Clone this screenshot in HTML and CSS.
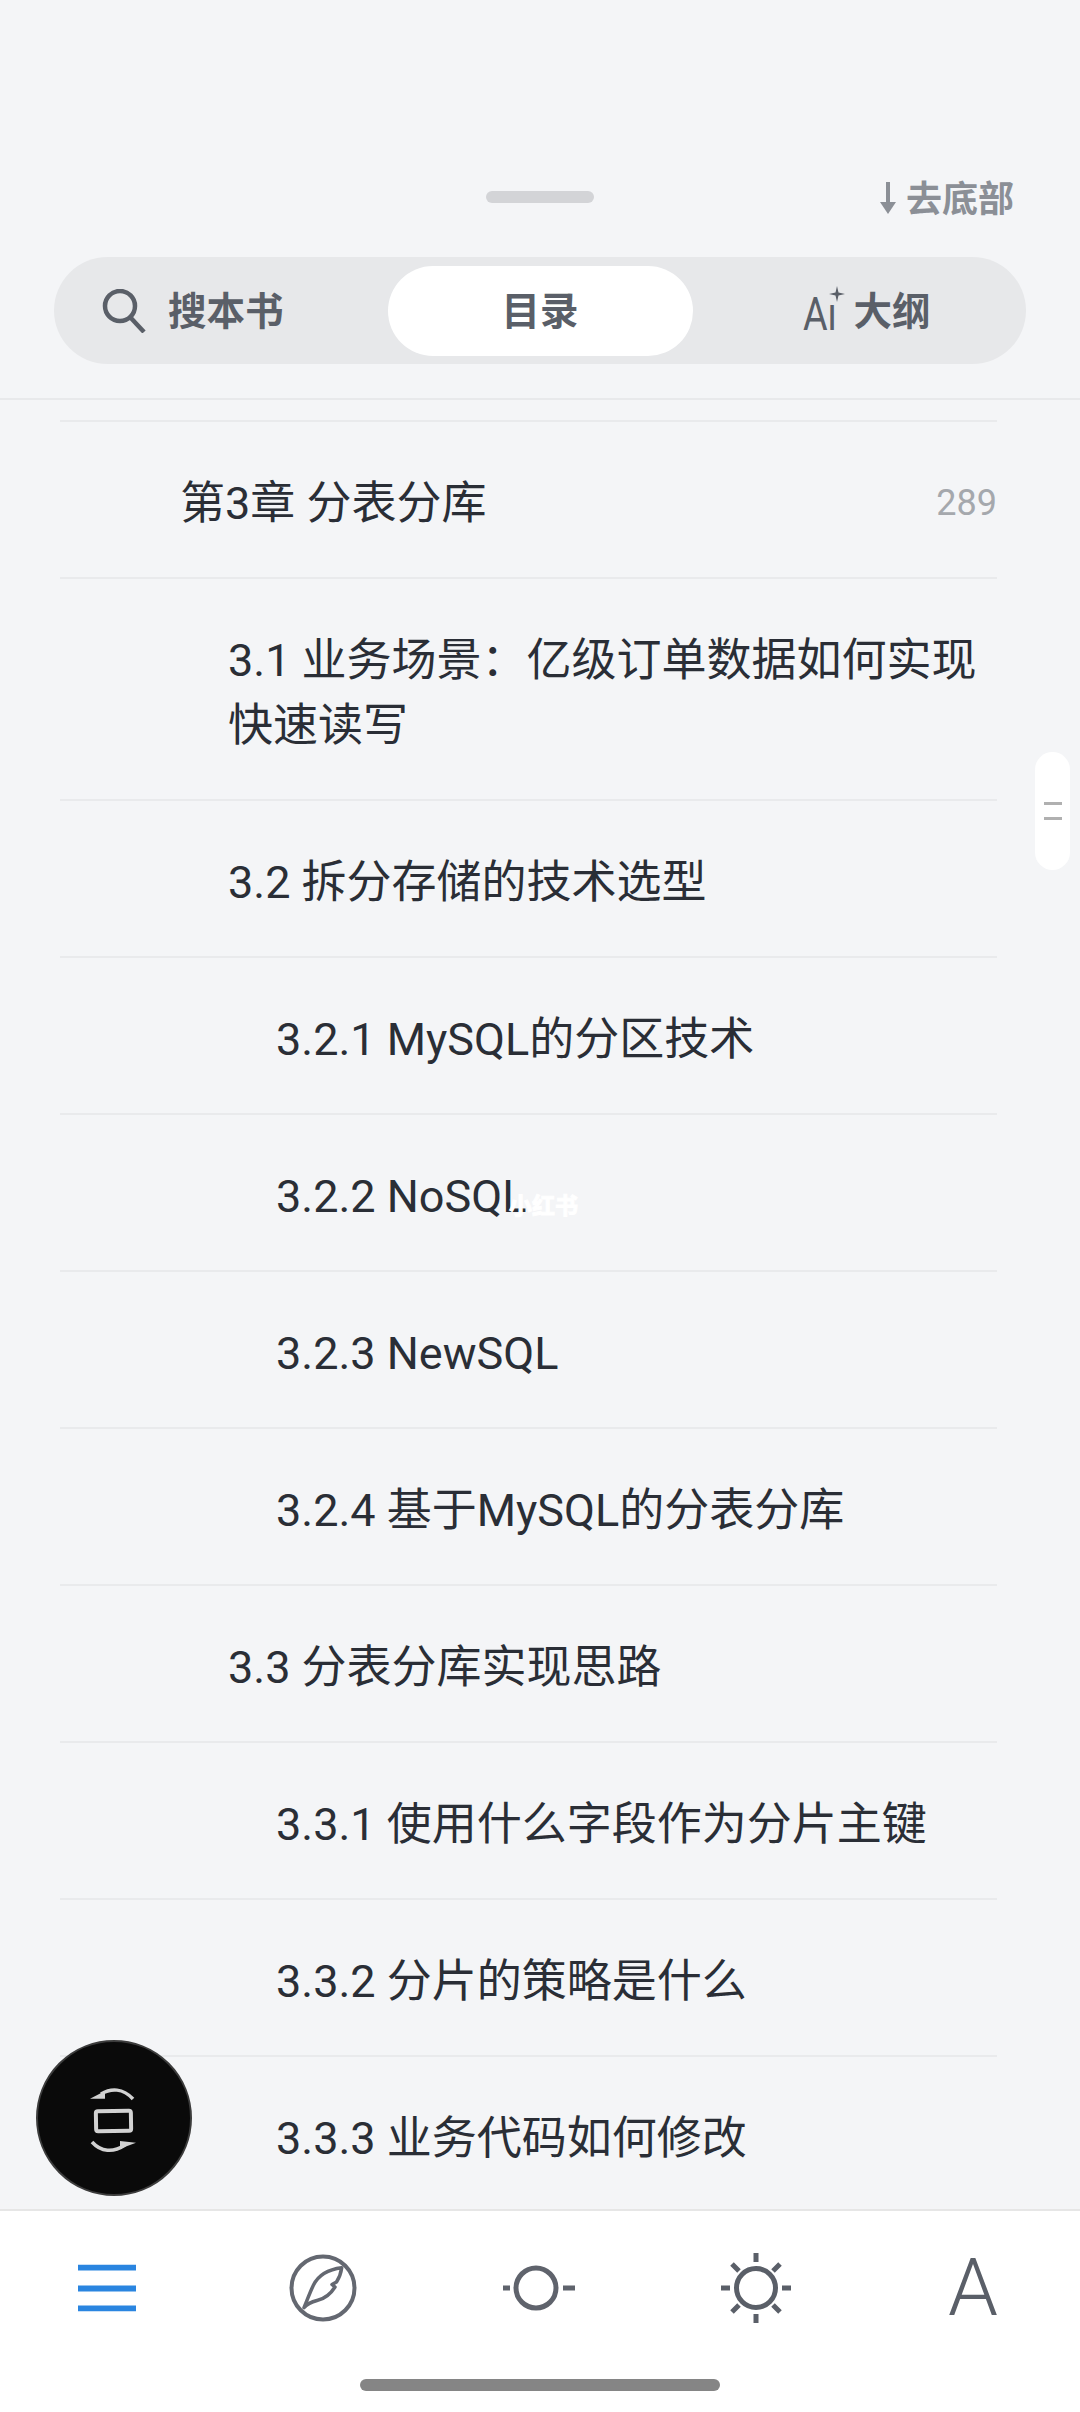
FILE: index.html
```html
<!DOCTYPE html>
<html lang="zh-CN">
<head>
    <meta charset="UTF-8">
    <meta name="viewport" content="width=device-width, initial-scale=1.0">
    <title>目录</title>
    <link rel="stylesheet" href="styles.css">
</head>
<body>
    <div class="page">
        <header class="top">
            <div class="top-row">
                <div class="handle"></div>
                <a class="to-bottom" href="#">
                    <svg class="down-arrow" width="18" height="32" viewBox="0 0 18 32">
                        <path d="M9 0V24" stroke="#8b8f96" stroke-width="4" fill="none"/>
                        <path d="M1 20L9 32L17 20Z" fill="#8b8f96"/>
                    </svg>
                    <span class="tab-label">去底部</span>
                </a>
            </div>
            <nav class="tabs">
                <a class="tab tab-search" href="#">
                    <svg width="44" height="44" viewBox="0 0 44 44">
                        <circle cx="18" cy="17" r="15" stroke="#5a5f68" stroke-width="4.5" fill="none"/>
                        <path d="M28 28L42 43" stroke="#5a5f68" stroke-width="4.5" fill="none"/>
                    </svg>
                    <span class="tab-label">搜本书</span>
                </a>
                <a class="tab tab-active" href="#"><span class="tab-label">目录</span></a>
                <a class="tab tab-ai" href="#">
                    <span class="ai-mark">
                        <span class="ai-text">Aı</span>
                        <svg class="spark" width="16" height="16" viewBox="0 0 16 16">
                            <path d="M8 0L9.5 6.500L16 8L9.5 9.500L8 16L6.500 9.500L0 8L6.500 6.500Z" fill="#5a5f68"/>
                        </svg>
                    </span>
                    <span class="tab-label">大纲</span>
                </a>
            </nav>
        </header>

        <main class="toc">
            <ul class="toc-list">
                <li class="toc-item toc-cut"></li>
                <li class="toc-item lvl-1"><span>第3章 分表分库</span><span class="page-num">289</span></li>
                <li class="toc-item lvl-2"><span>3.1 业务场景：亿级订单数据如何实现快速读写</span></li>
                <li class="toc-item lvl-2"><span>3.2 拆分存储的技术选型</span></li>
                <li class="toc-item lvl-3"><span>3.2.1 MySQL的分区技术</span></li>
                <li class="toc-item lvl-3"><span>3.2.2 NoSQL</span></li>
                <li class="toc-item lvl-3"><span>3.2.3 NewSQL</span></li>
                <li class="toc-item lvl-3"><span>3.2.4 基于MySQL的分表分库</span></li>
                <li class="toc-item lvl-2"><span>3.3 分表分库实现思路</span></li>
                <li class="toc-item lvl-3"><span>3.3.1 使用什么字段作为分片主键</span></li>
                <li class="toc-item lvl-3"><span>3.3.2 分片的策略是什么</span></li>
                <li class="toc-item lvl-3"><span>3.3.3 业务代码如何修改</span></li>
            </ul>
            <div class="scroll-thumb"><i></i><i></i></div>
            <div class="watermark">小红书</div>
            <button class="fab">
                <svg width="50" height="70" viewBox="0 0 50 70">
                    <path d="M12 11C22 5 34 5 44 16" stroke="#d2d2d2" stroke-width="3.500" fill="none"/>
                    <path d="M1 15.700L16 8L16 15.700Z" fill="#d2d2d2"/>
                    <rect x="7" y="28" width="35" height="20" rx="2" stroke="#d2d2d2" stroke-width="4" fill="none" transform="rotate(-1 24 38)"/>
                    <path d="M3 59C12 69 24 70 36 62" stroke="#d2d2d2" stroke-width="3.500" fill="none"/>
                    <path d="M31 58L47 59.700L31 65.700Z" fill="#d2d2d2"/>
                </svg>
            </button>
        </main>

        <footer class="bottom">
            <div class="tools">
                <a class="tool" href="#">
                    <svg width="58" height="47" viewBox="0 0 58 47">
                        <rect y="0" width="58" height="6" fill="#2a85e0"/>
                        <rect y="21" width="58" height="6" fill="#2a85e0"/>
                        <rect y="41" width="58" height="6" fill="#2a85e0"/>
                    </svg>
                </a>
                <a class="tool" href="#">
                    <svg width="68" height="68" viewBox="0 0 68 68">
                        <circle cx="34" cy="34" r="31.500" stroke="#646871" stroke-width="4" fill="none"/>
                        <path d="M52.700 13.700C42 15 30 20 24.500 31C21.500 37 19 44 15 53.700C19 49 24 47.500 28 46.500C35 45 41 41 46 33L43 30.500L47.500 28C50 24 52 19 52.700 13.700Z" stroke="#646871" stroke-width="3.500" fill="none" stroke-linejoin="round"/>
                    </svg>
                </a>
                <a class="tool" href="#">
                    <svg width="74" height="50" viewBox="0 0 74 50">
                        <circle cx="33" cy="25" r="20" stroke="#5f636c" stroke-width="5" fill="none"/>
                        <rect x="0" y="22.500" width="7" height="5" fill="#5f636c"/>
                        <rect x="60" y="22.500" width="12" height="5" fill="#5f636c"/>
                    </svg>
                </a>
                <a class="tool" href="#">
                    <svg width="72" height="72" viewBox="0 0 72 72">
                        <circle cx="36" cy="36" r="19.500" stroke="#5a5f68" stroke-width="5" fill="none"/>
                        <g stroke="#5a5f68" stroke-width="5" fill="none">
                            <path d="M36 1V10M36 62V71M1 36H10M62 36H71"/>
                            <path d="M12 12L19 19M53 53L60 60M60 12L53 19M19 53L12 60"/>
                        </g>
                    </svg>
                </a>
                <a class="tool tool-font" href="#">A</a>
            </div>
            <div class="home-bar"></div>
        </footer>
    </div>
</body>
</html>
```

FILE: styles.css
```css
* {
    box-sizing: border-box;
}

body {
    margin: 0;
    background-color: #f4f5f7;
    font-family: Roboto, "Noto Sans CJK SC", sans-serif;
}

a {
    color: inherit;
    text-decoration: none;
}

.page {
    display: flex;
    flex-direction: column;
    height: 2412px;
    overflow: hidden;
}

/* top area */
.top {
    height: 400px;
    padding: 178px 54px 0;
    border-bottom: 2px solid #e8e9eb;
}

.top-row {
    position: relative;
    display: flex;
    justify-content: flex-end;
    align-items: center;
    height: 42px;
    margin-bottom: 37px;
}

.handle {
    position: absolute;
    top: 13px;
    left: 432px;
    width: 108px;
    height: 12px;
    border-radius: 6px;
    background-color: #d3d4d7;
}

.to-bottom {
    display: flex;
    align-items: center;
    gap: 9px;
    margin-right: 12px;
    color: #8b8f96;
    font-size: 36px;
    font-weight: 700;
}

.down-arrow {
    margin-bottom: 3px;
}

.tabs {
    display: grid;
    grid-template-columns: 1fr 305px 1fr;
    align-items: center;
    height: 107px;
    padding: 0;
    border-radius: 54px;
    background-color: #e7e8ea;
}

.tab {
    display: flex;
    align-items: center;
    color: #5a5f68;
    font-size: 38.5px;
    font-weight: 700;
}

.tab-label {
    margin-bottom: 6px;
}

.tab-search {
    gap: 22px;
    padding-left: 48px;
}

.tab-active {
    justify-content: center;
    height: 90px;
    border-radius: 45px;
    background-color: #fff;
}

.tab-ai {
    gap: 15px;
    padding-left: 110px;
}

.ai-mark {
    position: relative;
    display: block;
    width: 36px;
    height: 44px;
    font-size: 46px;
    font-weight: 400;
    line-height: 50px;
}

.ai-text {
    display: block;
    transform: scaleX(0.82);
    transform-origin: left center;
}

.spark {
    position: absolute;
    top: -3px;
    right: -6px;
}

/* list */
.toc {
    position: relative;
    flex: 1;
    overflow: hidden;
}

.toc-list {
    margin: 0;
    padding: 0 83px 0 60px;
    list-style: none;
}

.toc-item {
    display: flex;
    justify-content: space-between;
    align-items: center;
    padding: 49px 0 41px;
    border-bottom: 2px solid #e9eaec;
    color: #2a2e36;
    font-size: 45px;
    line-height: 65px;
}

.toc-cut {
    height: 22px;
    padding: 0;
}

.lvl-1 {
    padding-left: 120px;
}

.lvl-2 {
    padding-left: 168px;
    padding-right: 18px;
}

.lvl-3 {
    padding-left: 216px;
}

.page-num {
    color: #a5a8ad;
    font-size: 36px;
}

.scroll-thumb {
    position: absolute;
    top: 352px;
    right: 10px;
    display: flex;
    flex-direction: column;
    align-items: center;
    justify-content: center;
    gap: 12px;
    width: 35px;
    height: 118px;
    border-radius: 18px;
    background-color: #fff;
}

.scroll-thumb i {
    width: 18px;
    height: 3px;
    background-color: #b0b0b0;
}

.watermark {
    position: absolute;
    top: 789px;
    left: 509px;
    color: #fff;
    font-size: 23px;
    font-weight: 700;
    line-height: 36px;
    -webkit-text-stroke: 1px #fff;
}

.fab {
    position: absolute;
    top: 1640px;
    left: 36px;
    display: flex;
    align-items: center;
    justify-content: center;
    width: 156px;
    height: 156px;
    padding: 0;
    border: 2px solid #3c3c3c;
    border-radius: 50%;
    background-color: #0a0a0a;
}

/* bottom bar */
.bottom {
    height: 203px;
    border-top: 2px solid #e6e6e6;
    background-color: #fff;
}

.tools {
    position: relative;
    height: 154px;
}

.tool {
    position: absolute;
    top: 50%;
    display: flex;
    transform: translateY(-50%);
}

.tool:nth-child(1) {
    left: 78px;
}

.tool:nth-child(2) {
    left: 289px;
}

.tool:nth-child(3) {
    left: 503px;
}

.tool:nth-child(4) {
    left: 720px;
}

.tool-font {
    left: 948px;
    color: #5a5f68;
    font-size: 80px;
    font-weight: 300;
    line-height: 80px;
}

.home-bar {
    width: 360px;
    height: 12px;
    margin: 14px auto 0;
    border-radius: 6px;
    background-color: #858585;
}
```
